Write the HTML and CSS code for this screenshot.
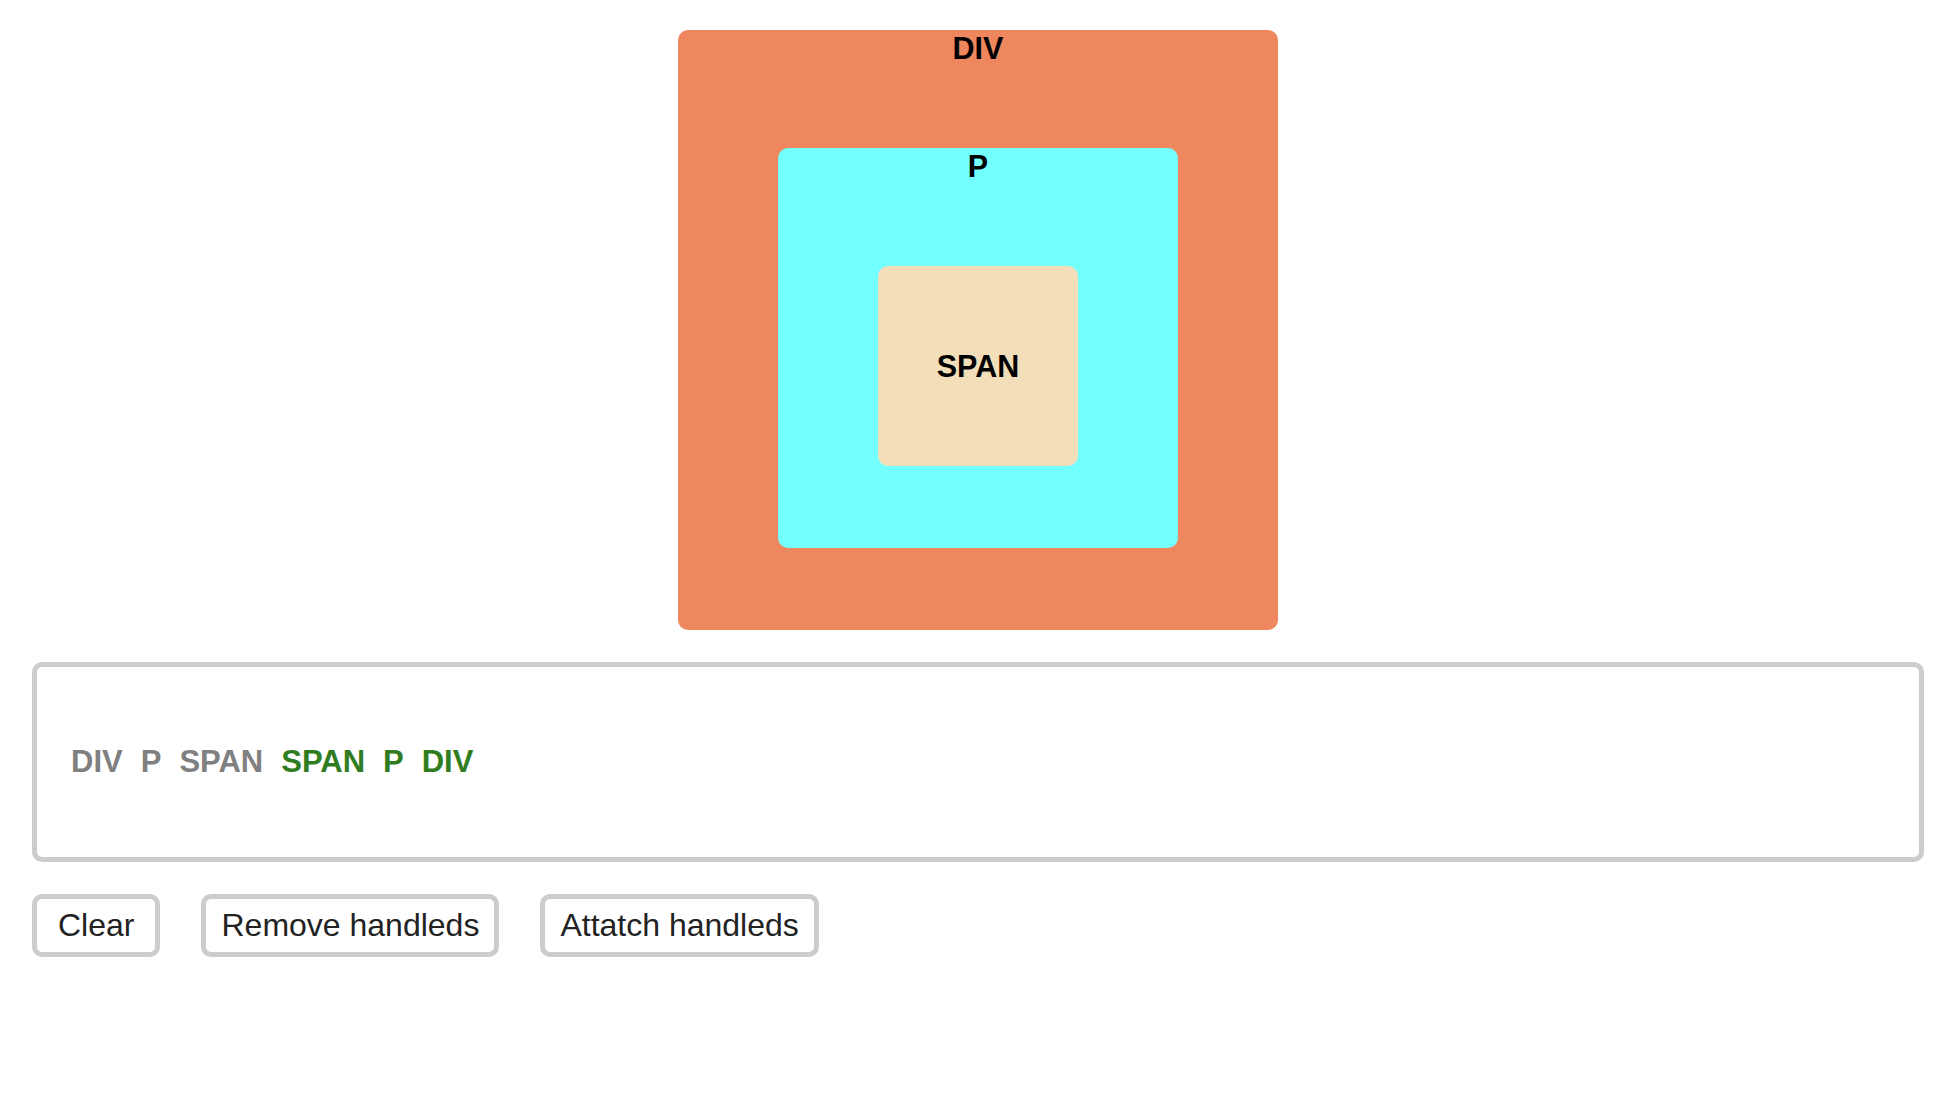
FILE: index.html
```html
<!DOCTYPE html>
<html>
<head>
<meta charset="utf-8">
<link rel="stylesheet" href="styles.css">
</head>
<body>
<div class="page">
  <div class="box box-div">
    <div class="label">DIV</div>
    <div class="inner">
      <div class="box box-p">
        <div class="label">P</div>
        <div class="inner">
          <div class="box box-span">
            <div class="span-label">SPAN</div>
          </div>
        </div>
      </div>
    </div>
  </div>
  <div class="log">
    <span class="cap">DIV</span>
    <span class="cap">P</span>
    <span class="cap">SPAN</span>
    <span class="bub">SPAN</span>
    <span class="bub">P</span>
    <span class="bub">DIV</span>
  </div>
  <div class="buttons">
    <button class="btn btn-short">Clear</button>
    <button class="btn">Remove handleds</button>
    <button class="btn">Attatch handleds</button>
  </div>
</div>
</body>
</html>
```
FILE: styles.css
```css
html, body {
  margin: 0;
  padding: 0;
  background: #fff;
}
body {
  font-family: "Liberation Sans", Arial, sans-serif;
}
.page {
  padding: 30px 32px;
  display: flex;
  flex-direction: column;
  gap: 32px;
}
.box {
  border-radius: 10px;
  display: flex;
  flex-direction: column;
  align-items: center;
  box-sizing: border-box;
}
.box-div {
  width: 600px;
  height: 600px;
  background: #ef875e;
  align-self: center;
}
.box-p {
  width: 400px;
  height: 400px;
  background: #74ffff;
}
.box-span {
  width: 200px;
  height: 200px;
  background: #f2deb8;
  justify-content: center;
}
.label, .span-label {
  font-size: 30.5px;
  font-weight: bold;
  line-height: 36px;
  color: #000;
}
.inner {
  flex: 1;
  display: flex;
  align-items: center;
  justify-content: center;
}
.log {
  height: 200px;
  box-sizing: border-box;
  border: 5px solid #cccccc;
  border-radius: 10px;
  padding: 0 34px;
  display: flex;
  align-items: center;
  gap: 18px;
  font-size: 31px;
  font-weight: bold;
  line-height: 36px;
}
.cap {
  color: #808080;
}
.bub {
  color: #2f7d20;
}
.buttons {
  display: flex;
  gap: 41px;
}
.btn {
  font-family: "Liberation Sans", Arial, sans-serif;
  font-size: 32px;
  line-height: 36px;
  color: #222;
  background: #fff;
  border: 5px solid #cccccc;
  border-radius: 10px;
  padding: 8px 15px 9px;
  margin: 0;
}
.btn-short {
  padding-left: 21px;
  padding-right: 21px;
}
```
